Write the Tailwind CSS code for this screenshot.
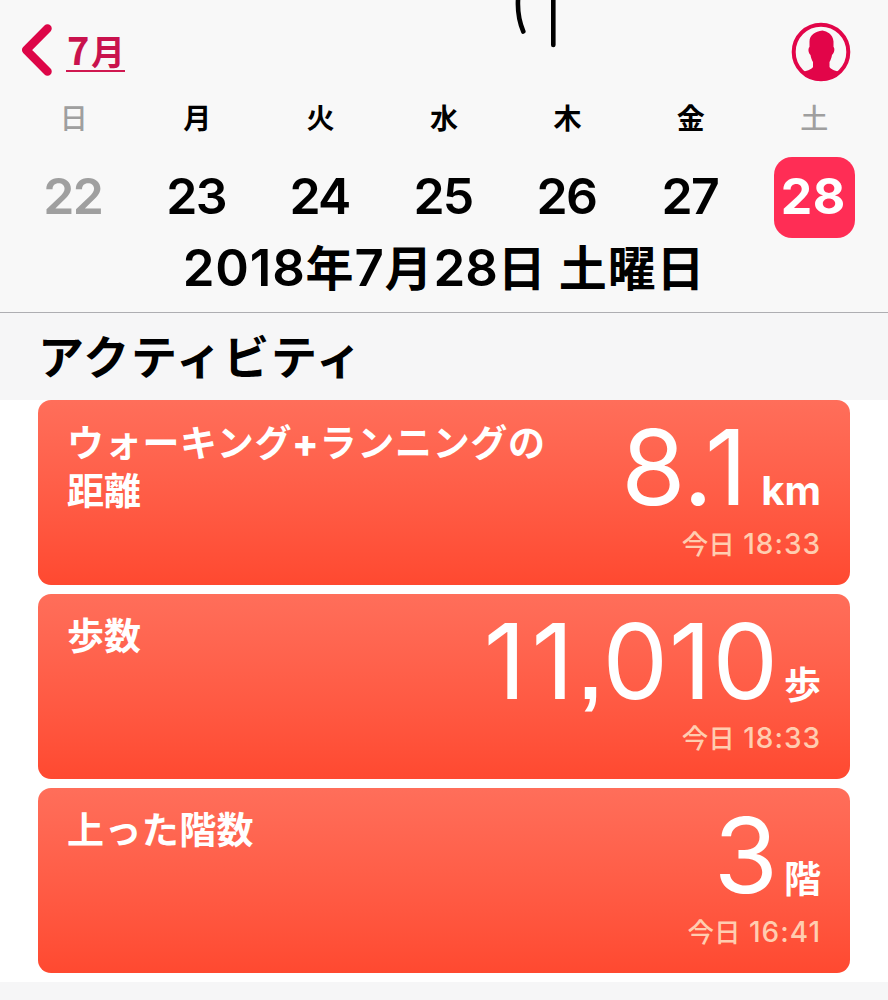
<!DOCTYPE html>
<html lang="ja">
<head>
<meta charset="utf-8">
<title>アクティビティ</title>
<script src="https://cdn.jsdelivr.net/npm/@tailwindcss/browser@4"></script>
</head>
<body class="w-[888px] h-[1000px] overflow-hidden bg-white text-black font-['Inter','Noto_Sans_CJK_JP',sans-serif]">
<header class="relative h-[313px] bg-[#f8f8f8] border-b border-[#aeaeb2]">
  <svg class="absolute left-[510px] top-0" width="60" height="50" fill="none" stroke="#000" stroke-width="4.6" stroke-linecap="round"><path d="M8.5 -6C7 7 8.5 20 13.3 31.5"/><path d="M43.3 -5V45"/></svg>
  <nav class="flex h-[100px] items-center justify-between pl-[20px] pr-[37px]">
    <div class="flex items-center gap-[12px] text-[#dd0648]">
      <svg width="34" height="54" fill="none" stroke="currentColor" stroke-width="8.500" stroke-linecap="round" stroke-linejoin="round"><path d="M27.5 5.500L6.200 27L27.500 48.500"/></svg>
      <a class="relative mt-[1px] block h-[50px] w-[59px] text-[36px] leading-[46px] whitespace-nowrap text-[#c9124d]"><span class="inline-block w-[25px] pl-[1px] font-['Noto_Sans_CJK_JP'] text-[38px] font-bold">7</span><span class="text-[34px] font-bold">月</span><span class="absolute left-0 top-[44px] h-[2px] w-[59px] bg-[#d01850]"></span></a>
    </div>
    <svg width="60" height="60" viewBox="0 0 60 60" class="mt-[3px]"><circle cx="30" cy="30" r="27.300" fill="none" stroke="#e20549" stroke-width="4"/><path fill="#e20549" d="M31.500 8.500C36 9.500 42 12 42.500 19.500V25C44 26 43.500 31 41 33C40.500 36 39.500 38.500 38.500 40V45C40 48 45 48.500 49.500 50.500C44 56 37 58.500 30 58.500S16 56 10.500 50.500C15 48.500 20.500 48 22 45V40C21 38.500 20 36 19.500 33C17 31 17 26 18.500 25V19.500C18.500 13 24 9.500 31.500 8.500Z"/></svg>
  </nav>
  <div class="grid grid-cols-7 px-3 pt-[1px] text-center text-[28px] leading-[36px] font-bold">
    <span class="font-medium text-[#9f9f9f]">日</span><span>月</span><span>火</span><span>水</span><span>木</span><span>金</span><span class="font-medium text-[#9f9f9f]">土</span>
  </div>
  <div class="mt-[20px] grid h-[81px] grid-cols-7 pr-[13px] pl-[11px] text-center text-[50px] leading-[79px] font-semibold tracking-[-1.700px]">
    <span class="text-[#9f9f9f]">22</span><span>23</span><span>24</span><span>25</span><span>26</span><span>27</span>
    <span class="relative left-[1px] mx-auto h-[81px] w-[81px] rounded-[18px] bg-[#ff2d55] pr-[2px] font-bold text-white tracking-[0.500px]">28</span>
  </div>
  <h1 class="h-[62px] text-center text-[48px] leading-[60px] font-bold tracking-[0.800px] whitespace-nowrap"><span class="text-[51px] font-semibold">2018</span>年<span class="text-[51px] font-semibold">7</span>月<span class="text-[51px] font-semibold tracking-[0]">28</span>日 土曜日</h1>
</header>
<main>
  <h2 class="h-[87px] bg-[#f6f6f7] pl-[38px] text-[46px] leading-[88px] font-semibold tracking-[1.600px]">アクティビティ</h2>
  <div class="flex flex-col gap-[9.500px] px-[38px] text-white">
    <section class="flex h-[184.500px] justify-between rounded-[13px] bg-linear-to-b from-[#ff6e5a] to-[#ff4930] px-[29px]">
      <h3 class="pt-[19px] text-[37px] leading-[48px] font-semibold whitespace-nowrap"><span class="tracking-[0.700px]">ウォーキング<span class="text-[39px] font-extrabold">+</span>ランニングの</span><br>距離</h3>
      <div class="flex flex-col items-end">
        <p class="flex h-[123px] items-baseline gap-[14px] leading-[134px] whitespace-nowrap"><span class="text-[104px]"><span class="tracking-[-2.500px]">8</span><span class="tracking-[-8px]">.</span>1</span><span class="text-[40px] font-bold">km</span></p>
        <p class="text-[28px] leading-[42px] font-medium tracking-[1px] text-[#ffcdb0]"><span class="text-[26.500px] tracking-[0]">今日</span> 18:33</p>
      </div>
    </section>
    <section class="flex h-[184.500px] justify-between rounded-[13px] bg-linear-to-b from-[#ff6e5a] to-[#ff4930] px-[29px]">
      <h3 class="pt-[19px] text-[37px] leading-[48px] font-semibold whitespace-nowrap">歩数</h3>
      <div class="flex flex-col items-end">
        <p class="flex h-[123px] items-baseline gap-[5px] leading-[134px] whitespace-nowrap"><span class="text-[104px] tracking-[1px]"><span class="tracking-[5.500px]">11</span><span class="font-['Liberation_Sans'] text-[80px] font-bold">,</span>010</span><span class="text-[37px] font-semibold">歩</span></p>
        <p class="text-[28px] leading-[42px] font-medium tracking-[1px] text-[#ffcdb0]"><span class="text-[26.500px] tracking-[0]">今日</span> 18:33</p>
      </div>
    </section>
    <section class="flex h-[184.500px] justify-between rounded-[13px] bg-linear-to-b from-[#ff6e5a] to-[#ff4930] px-[29px]">
      <h3 class="pt-[19px] text-[37px] leading-[48px] font-semibold tracking-[0.400px] whitespace-nowrap">上った階数</h3>
      <div class="flex flex-col items-end">
        <p class="flex h-[123px] items-baseline gap-[6px] leading-[134px] whitespace-nowrap"><span class="text-[104px]">3</span><span class="text-[37px] font-semibold">階</span></p>
        <p class="text-[28px] leading-[42px] font-medium tracking-[1px] text-[#ffcdb0]"><span class="text-[26.500px] tracking-[0]">今日</span> 16:41</p>
      </div>
    </section>
  </div>
</main>
<footer class="mt-[9.500px] h-[20px] bg-[#f6f6f7]"></footer>
</body>
</html>
